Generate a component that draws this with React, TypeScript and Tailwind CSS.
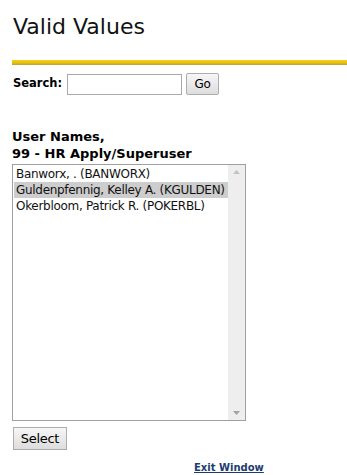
const users = [
  { label: "Banworx, . (BANWORX)", selected: false },
  { label: "Guldenpfennig, Kelley A. (KGULDEN)", selected: true },
  { label: "Okerbloom, Patrick R. (POKERBL)", selected: false },
];

export default function App() {
  return (
    <div className="w-[347px] h-[475px] bg-white text-black font-['Verdana','DejaVu_Sans',sans-serif] overflow-hidden">
      {/* Title */}
      <h1 className="pl-[13px] pt-[13px] text-[22px] leading-[28px] font-normal text-[#111]">Valid Values</h1>

      {/* Yellow rule */}
      <div className="ml-[12px] mt-[19px] h-[5px] bg-gradient-to-b from-[#f5d31a] via-[#e8c300] to-[#b8a040]" />

      {/* Search row */}
      <div className="flex items-center pl-[13px] mt-[8px] h-[22px]">
        <span className="text-[11.5px] font-bold">Search:</span>
        <input
          type="text"
          className="ml-[5px] w-[115px] h-[21px] border border-[#a9a9a9] bg-white outline-none"
        />
        <button className="ml-[4px] w-[33px] h-[22px] border border-[#adadad] rounded-[2px] bg-gradient-to-b from-[#f6f6f6] to-[#dddddd] text-[12px] tracking-[-0.3px]">
          Go
        </button>
      </div>

      {/* Heading */}
      <div className="pl-[12px] mt-[33px] text-[13px] leading-[17px] font-bold">
        <div>User Names,</div>
        <div>99 - HR Apply/Superuser</div>
      </div>

      {/* List box */}
      <div className="ml-[12px] mt-[2px] w-[234px] h-[257px] border border-[#a0a0a0] flex">
        <div className="flex-1 pt-[1px] pl-[1px] text-[12px] leading-[16px] tracking-[-0.3px] text-[#111]">
          {users.map((u) => (
            <div
              key={u.label}
              className={`pl-[2px] whitespace-nowrap ${u.selected ? "bg-[#cdcdcd]" : ""}`}
            >
              {u.label}
            </div>
          ))}
        </div>
        <div className="w-[17px] bg-[#eeeeee] flex flex-col justify-between items-center py-[5px]">
          <svg width="7" height="4" viewBox="0 0 7 4">
            <path d="M0 4 L3.5 0 L7 4 Z" fill="#c2c2c2" />
          </svg>
          <svg width="7" height="4" viewBox="0 0 7 4">
            <path d="M0 0 L3.5 4 L7 0 Z" fill="#a3a3a3" />
          </svg>
        </div>
      </div>

      {/* Select button */}
      <button className="ml-[13px] mt-[6px] w-[54px] h-[23px] border border-[#adadad] bg-gradient-to-b from-[#f6f6f6] to-[#dddddd] text-[13px] tracking-[-0.3px]">
        Select
      </button>

      {/* Exit link */}
      <div className="pl-[194px] mt-[4px]">
        <a href="#" className="text-[10px] font-bold text-[#1c3d6e] underline">
          Exit Window
        </a>
      </div>
    </div>
  );
}
